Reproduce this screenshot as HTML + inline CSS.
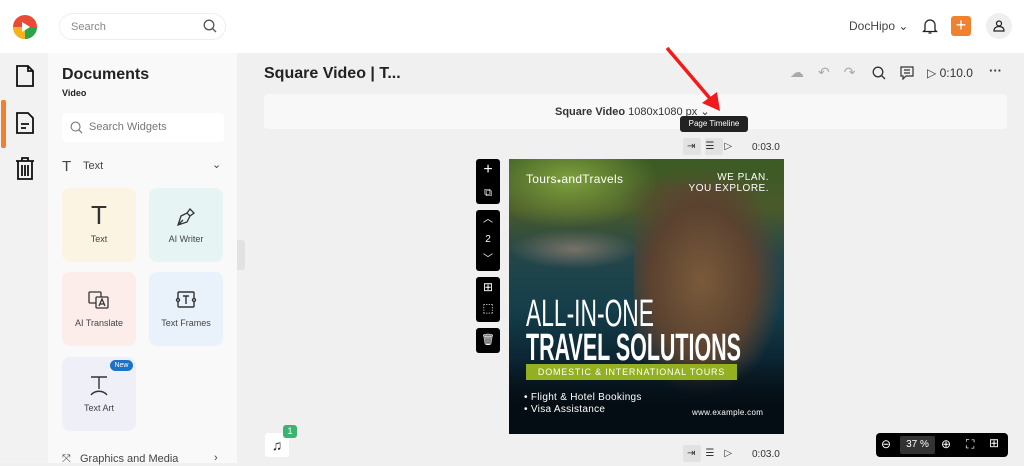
<!DOCTYPE html>
<html><head><style>
*{box-sizing:border-box;margin:0;padding:0}
body{width:1024px;height:463px;overflow:hidden;font-family:"Liberation Sans",sans-serif;background:#f0f0f0;position:relative;color:#222}
.a{position:absolute}
.card{position:absolute;width:74px;height:74px;border-radius:8px;font-size:9px;color:#444;text-align:center}
.card span{position:absolute;left:0;right:0;top:46px}
.card svg{position:absolute;left:26px;top:18px}
.tb{position:absolute;background:#000;border-radius:3px;width:24px}
</style></head><body>
<div class="a" style="left:0;top:0;width:1024px;height:53px;background:#fff"></div>
<svg class="a" style="left:12px;top:14px" width="26" height="26" viewBox="0 0 26 26"><circle cx="13" cy="13" r="12" fill="#e94a35"/><path d="M1 13A12 12 0 0 0 13 25V13Z" fill="#f6b21b"/><path d="M13 25A12 12 0 0 0 25 13H13Z" fill="#2aa54a"/><path d="M10 8L18 13L10 18Z" fill="#fff"/></svg>
<div class="a" style="left:59px;top:13px;width:167px;height:27px;border:1px solid #eee;border-radius:14px;font-size:11px;color:#888;padding:7px 11px">Search</div>
<svg class="a" style="left:203px;top:19px" width="14" height="14" viewBox="0 0 14 14" fill="none" stroke="#555" stroke-width="1.3"><circle cx="6" cy="6" r="4.8"/><path d="M9.5 9.5L13 13"/></svg>
<div class="a" style="left:849px;top:19px;font-size:12px;color:#444">DocHipo ⌄</div>
<svg class="a" style="left:922px;top:18px" width="16" height="17" viewBox="0 0 16 17" fill="none" stroke="#222" stroke-width="1.3"><path d="M3 12V7a5 5 0 0 1 10 0v5l1.5 1.5h-13Z"/><path d="M6.5 15h3"/></svg>
<div class="a" style="left:951px;top:16px;width:20px;height:20px;background:#f0812f;border-radius:3px;color:#fff;font-size:18px;line-height:19px;text-align:center">+</div>
<div class="a" style="left:986px;top:13px;width:26px;height:26px;background:#efefef;border-radius:50%"></div>
<svg class="a" style="left:992px;top:19px" width="14" height="14" viewBox="0 0 14 14" fill="none" stroke="#222" stroke-width="1.2"><circle cx="7" cy="4.5" r="2.5"/><path d="M2 12c0-3 2-4.5 5-4.5s5 1.5 5 4.5Z"/></svg>
<div class="a" style="left:0;top:53px;width:48px;height:410px;background:#f2f2f2"></div>
<div class="a" style="left:1px;top:100px;width:5px;height:48px;background:#f0812f;border-radius:2px"></div>
<svg class="a" style="left:15px;top:64px" width="20" height="24" viewBox="0 0 20 24" fill="none" stroke="#111" stroke-width="1.8"><path d="M2 2h11l5 5v15H2Z"/><path d="M13 2v5h5"/></svg>
<svg class="a" style="left:15px;top:111px" width="20" height="24" viewBox="0 0 20 24" fill="none" stroke="#111" stroke-width="1.8"><path d="M2 2h11l5 5v15H2Z"/><path d="M6 13h8M6 17h5"/></svg>
<svg class="a" style="left:15px;top:157px" width="20" height="24" viewBox="0 0 20 24" fill="none" stroke="#111" stroke-width="1.8"><path d="M1 4h18M7 4V1h6v3M3 4v18h14V4M7 8v11M10 8v11M13 8v11"/></svg>
<div class="a" style="left:48px;top:53px;width:189px;height:410px;background:#f9f9f9"></div>
<div class="a" style="left:62px;top:66px;font-size:16px;font-weight:bold">Documents</div>
<div class="a" style="left:62px;top:88px;font-size:9px;font-weight:bold">Video</div>
<div class="a" style="left:62px;top:113px;width:162px;height:29px;background:#fff;border-radius:4px;font-size:11px;color:#777;padding:8px 0 0 27px">Search Widgets</div>
<svg class="a" style="left:70px;top:121px" width="13" height="13" viewBox="0 0 14 14" fill="none" stroke="#777" stroke-width="1.2"><circle cx="6" cy="6" r="4.8"/><path d="M9.5 9.5L13 13"/></svg>
<div class="a" style="left:62px;top:158px;font-size:15px;color:#444">T</div>
<div class="a" style="left:83px;top:160px;font-size:11px;color:#444">Text</div>
<div class="a" style="left:212px;top:158px;font-size:11px;color:#444">⌄</div>
<div class="card" style="left:62px;top:188px;background:#fcf4e2"><div class="a" style="left:0;right:0;top:12px;font-size:26px;color:#333;font-weight:300">T</div><span>Text</span></div>
<div class="card" style="left:149px;top:188px;background:#e6f5f4"><svg width="22" height="22" viewBox="0 0 22 22" fill="none" stroke="#333" stroke-width="1.3"><path d="M3 19l3-9 6-3 3 3-3 6-9 3ZM3 19l5-5M12 7l3-4 4 4-4 3"/></svg><span>AI Writer</span></div>
<div class="card" style="left:62px;top:272px;background:#fcedea"><svg width="22" height="20" viewBox="0 0 22 20" fill="none" stroke="#333" stroke-width="1.3"><rect x="1" y="2" width="12" height="11" rx="1"/><rect x="8" y="7" width="12" height="11" rx="1" fill="#fcedea"/><path d="M11 16l3-7 3 7M12 14h4"/></svg><span>AI Translate</span></div>
<div class="card" style="left:149px;top:272px;background:#e9f2fa"><svg width="22" height="20" viewBox="0 0 22 20" fill="none" stroke="#333" stroke-width="1.4"><rect x="3" y="2" width="16" height="15" rx="1"/><path d="M8 6h6M11 6v8"/><circle cx="3" cy="10" r="1.5" fill="#fff"/><circle cx="19" cy="10" r="1.5" fill="#fff"/></svg><span>Text Frames</span></div>
<div class="card" style="left:62px;top:357px;background:#efeff8"><div class="a" style="left:48px;top:3px;width:23px;height:11px;border-radius:6px;background:#1a73c8;color:#fff;font-size:7px;line-height:11px">New</div><svg width="22" height="22" viewBox="0 0 22 22" fill="none" stroke="#333" stroke-width="1.4"><path d="M3 2h16M11 2v12M3 20c4-5 12-5 16 0"/></svg><span>Text Art</span></div>
<div class="a" style="left:62px;top:453px;font-size:11px;color:#444">⤧ &nbsp; Graphics and Media</div>
<div class="a" style="left:214px;top:452px;font-size:11px;color:#444">›</div>
<div class="a" style="left:237px;top:240px;width:8px;height:30px;background:#e2e2e2;border-radius:0 3px 3px 0"></div>
<div class="a" style="left:264px;top:65px;font-size:16px;font-weight:bold">Square Video | T...</div>
<div class="a" style="left:790px;top:64px;font-size:14px;color:#aaa;letter-spacing:14px">☁↶↷</div>
<svg class="a" style="left:872px;top:66px" width="14" height="14" viewBox="0 0 14 14" fill="none" stroke="#333" stroke-width="1.3"><circle cx="6" cy="6" r="4.8"/><path d="M9.5 9.5L13 13"/></svg>
<svg class="a" style="left:900px;top:66px" width="14" height="14" viewBox="0 0 14 14" fill="none" stroke="#333" stroke-width="1.2"><path d="M1 1h12v9H6l-3 3v-3H1Z"/><path d="M4 4h6M4 7h6"/></svg>
<div class="a" style="left:927px;top:66px;font-size:12px;color:#333">▷ 0:10.0</div>
<div class="a" style="left:989px;top:63px;font-size:13px;font-weight:bold;color:#333">···</div>
<div class="a" style="left:264px;top:94px;width:743px;height:35px;background:#f8f8f8;border-radius:4px"></div>
<div class="a" style="left:555px;top:105px;font-size:11px;color:#333"><b>Square Video</b> 1080x1080 px ⌄</div>
<div class="a" style="left:680px;top:116px;width:68px;height:16px;background:#222;border-radius:3px;color:#fff;font-size:8px;text-align:center;line-height:16px">Page Timeline</div>
<svg class="a" style="left:660px;top:45px" width="65" height="70" viewBox="0 0 65 70"><path d="M7 3L53 57" stroke="#f21b1b" stroke-width="3.5"/><path d="M60 66L42 58L57 47Z" fill="#f21b1b"/></svg>
<div class="a" style="left:683px;top:138px;width:18px;height:17px;background:#e2e2e2;border-radius:2px"></div>
<div class="a" style="left:705px;top:138px;width:18px;height:17px;background:#e2e2e2;border-radius:2px"></div>
<div class="a" style="left:687px;top:141px;font-size:10px;color:#333;letter-spacing:10px">⇥☰▷</div>
<div class="a" style="left:752px;top:142px;font-size:10px;color:#333">0:03.0</div>
<div class="a" style="left:683px;top:445px;width:18px;height:17px;background:#e2e2e2;border-radius:2px"></div>
<div class="a" style="left:687px;top:448px;font-size:10px;color:#333;letter-spacing:10px">⇥☰▷</div>
<div class="a" style="left:752px;top:449px;font-size:10px;color:#333">0:03.0</div>
<div class="tb" style="left:476px;top:159px;height:45px;color:#fff;font-size:16px;text-align:center;line-height:22px">+<br><span style="font-size:11px">⧉</span></div>
<div class="tb" style="left:476px;top:210px;height:61px;color:#fff;font-size:10px;text-align:center;line-height:20px">︿<br>2<br>﹀</div>
<div class="tb" style="left:476px;top:277px;height:45px;color:#fff;font-size:12px;text-align:center;line-height:21px">⊞<br>⬚</div>
<div class="tb" style="left:476px;top:328px;height:25px;color:#fff;font-size:11px;text-align:center;line-height:25px">🗑</div>
<div class="a" style="left:509px;top:159px;width:275px;height:275px;overflow:hidden;background:linear-gradient(180deg,#3b5a24 0%,#4a5a2a 18%,#24464a 35%,#143e4a 55%,#0c2634 72%,#07131c 100%)">
<div class="a" style="left:0;top:0;width:150px;height:70px;background:radial-gradient(ellipse at 40% 30%,#7ea03c,transparent 70%)"></div>
<div class="a" style="left:110px;top:10px;width:150px;height:60px;background:radial-gradient(ellipse,#5a4a30,transparent 70%)"></div>
<div class="a" style="left:125px;top:25px;width:150px;height:215px;background:radial-gradient(ellipse at 45% 45%,#7a5a3a 0%,#5a4230 45%,transparent 70%)"></div>
<div class="a" style="left:0;top:70px;width:130px;height:40px;background:radial-gradient(ellipse,#777268,transparent 70%)"></div>
<div class="a" style="left:0;top:200px;width:275px;height:75px;background:linear-gradient(180deg,transparent,#050d14 60%)"></div>
<div class="a" style="left:17px;top:13px;font-size:12px;color:#fff;letter-spacing:.3px">Tours<span style="font-size:7px">●</span>andTravels</div>
<div class="a" style="left:160px;top:13px;font-size:10px;color:#fff;text-align:right;width:100px;line-height:11px;letter-spacing:.5px">WE PLAN.<br>YOU EXPLORE.</div>
<svg class="a" style="left:0;top:0" width="275" height="275"><text x="17" y="167" fill="#fff" font-size="38" font-family="Liberation Sans" textLength="128" lengthAdjust="spacingAndGlyphs">ALL-IN-ONE</text><text x="17" y="201" fill="#fff" font-size="38" font-weight="bold" font-family="Liberation Sans" textLength="215" lengthAdjust="spacingAndGlyphs">TRAVEL SOLUTIONS</text></svg>
<div class="a" style="left:17px;top:205px;width:211px;height:16px;background:#93b020;color:#fff;font-size:9px;line-height:16px;text-align:center;letter-spacing:.8px">DOMESTIC &amp; INTERNATIONAL TOURS</div>
<div class="a" style="left:15px;top:233px;font-size:10px;color:#fff;line-height:12px;letter-spacing:.3px">• Flight &amp; Hotel Bookings<br>• Visa Assistance</div>
<div class="a" style="left:183px;top:249px;font-size:8px;color:#fff;letter-spacing:.3px">www.example.com</div>
</div>
<div class="a" style="left:265px;top:433px;width:24px;height:24px;background:#fff;border-radius:3px;font-size:14px;text-align:center;line-height:24px">♫</div>
<div class="a" style="left:283px;top:425px;width:14px;height:13px;background:#3cb371;border-radius:3px;color:#fff;font-size:9px;text-align:center;line-height:13px">1</div>
<div class="a" style="left:876px;top:433px;width:132px;height:24px;background:#000;border-radius:4px;color:#fff;font-size:12px"><span class="a" style="left:5px;top:4px">⊖</span><div class="a" style="left:24px;top:3px;width:35px;height:18px;background:#333;border-radius:2px;font-size:10px;line-height:18px;text-align:center">37 %</div><span class="a" style="left:65px;top:4px">⊕</span><span class="a" style="left:90px;top:4px">⛶</span><span class="a" style="left:113px;top:3px">⊞</span></div>
</body></html>
